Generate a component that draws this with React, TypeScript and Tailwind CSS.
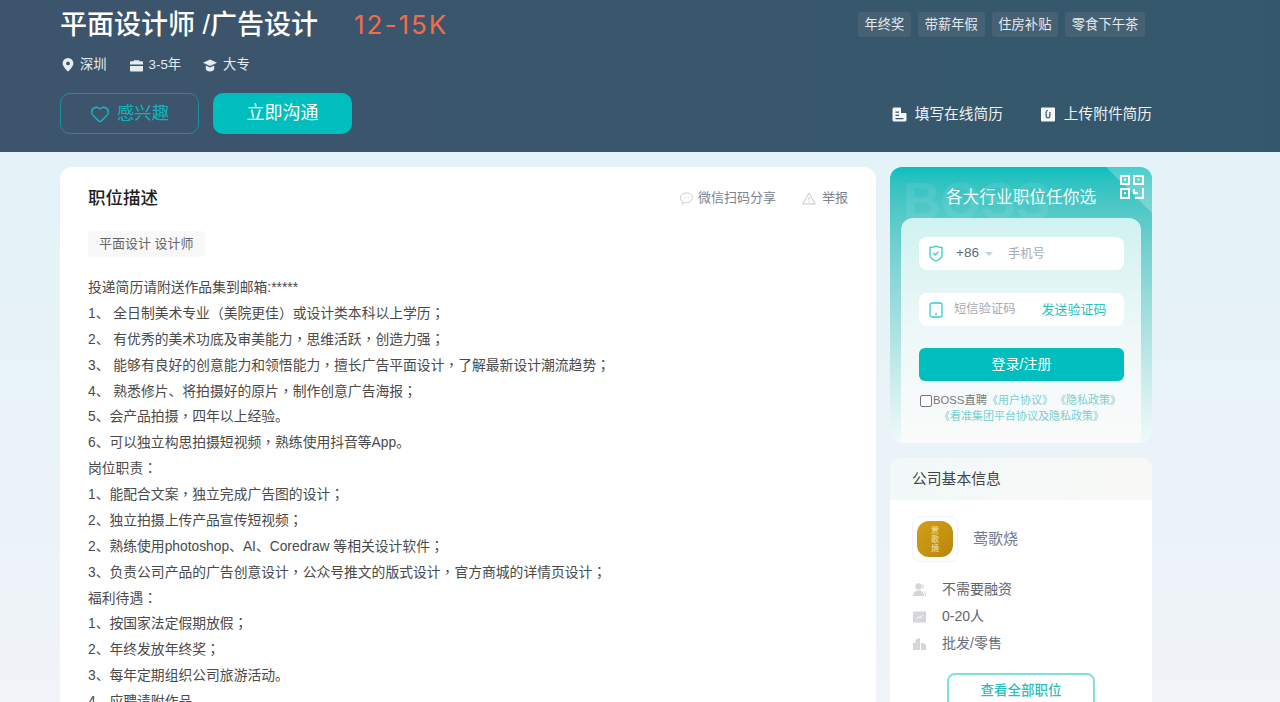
import { Heart } from "lucide-react";

const desc = [
  "投递简历请附送作品集到邮箱:*****",
  "1、 全日制美术专业（美院更佳）或设计类本科以上学历；",
  "2、 有优秀的美术功底及审美能力，思维活跃，创造力强；",
  "3、 能够有良好的创意能力和领悟能力，擅长广告平面设计，了解最新设计潮流趋势；",
  "4、 熟悉修片、将拍摄好的原片，制作创意广告海报；",
  "5、会产品拍摄，四年以上经验。",
  "6、可以独立构思拍摄短视频，熟练使用抖音等App。",
  "岗位职责：",
  "1、能配合文案，独立完成广告图的设计；",
  "2、独立拍摄上传产品宣传短视频；",
  "2、熟练使用photoshop、AI、Coredraw 等相关设计软件；",
  "3、负责公司产品的广告创意设计，公众号推文的版式设计，官方商城的详情页设计；",
  "福利待遇：",
  "1、按国家法定假期放假；",
  "2、年终发放年终奖；",
  "3、每年定期组织公司旅游活动。",
  "4、应聘请附作品",
];

const tags = ["年终奖", "带薪年假", "住房补贴", "零食下午茶"];

// the reference centres this punctuation in its box, the SC font does not
const Line = ({ text }: { text: string }) => (
  <div>
    {text.split(/([，；：（）])/).map((part, i) =>
      /^[，；：（）]$/.test(part) ? (
        <span key={i} className="font-['Noto_Sans_CJK_TC',sans-serif] leading-[0]">
          {part}
        </span>
      ) : (
        part
      )
    )}
  </div>
);

const Header = () => (
  <div className="h-[152px] shrink-0 bg-gradient-to-r from-[#3d546c] to-[#33586c] overflow-hidden">
    <div className="w-[1092px] ml-[60px]">
      <div className="flex justify-between h-[50px]">
        <div className="flex items-center">
          <h1 className="text-[27px] leading-[50px] font-medium text-white">平面设计师 /广告设计</h1>
          <span className="ml-[36px] font-['Inter',sans-serif] text-[26px] leading-[50px] tracking-[2px] text-[#f26d47]">12-15K</span>
        </div>
        <div className="flex gap-[7px] mt-3 mr-[7px]">
          {tags.map((t) => (
            <span key={t} className="h-[25px] px-[6.7px] rounded-[3px] bg-[#466074] text-[13.3px] leading-[25px] text-[#e4eaee]">
              {t}
            </span>
          ))}
        </div>
      </div>
      <div className="flex items-center h-[28px] mt-px text-[13.3px] text-[#e6ebef]">
        <svg width="12" height="14" viewBox="0 0 12 14" className="ml-[2px]">
          <path fillRule="evenodd" fill="#e6ebef" d="M6 0a5.4 5.4 0 0 1 5.4 5.4C11.400 8.600 6 13.500 6 13.500S.6 8.600.6 5.400A5.400 5.400 0 0 1 6 0Zm0 3.500a1.900 1.900 0 1 0 0 3.800 1.900 1.900 0 0 0 0-3.800Z" />
        </svg>
        <span className="ml-[6px]">深圳</span>
        <svg width="13" height="13" viewBox="0 0 14 13" className="ml-[23px]">
          <path fill="#e6ebef" d="M4 2V.8h6V2h3a1 1 0 0 1 1 1v2.500H0V3a1 1 0 0 1 1-1h3Zm1.200 0h3.600v-.2H5.200V2ZM0 7h14v5a1 1 0 0 1-1 1H1a1 1 0 0 1-1-1V7Z" />
        </svg>
        <span className="ml-[6px]">3-5年</span>
        <svg width="14" height="13" viewBox="0 0 15 13" className="ml-[22px]">
          <path fill="#e6ebef" d="M7.500 0 15 3.500 7.500 7 0 3.500 7.500 0ZM3 6.600l4.500 2 4.500-2V10c0 1.700-2 3-4.500 3S3 11.700 3 10V6.600Z" />
        </svg>
        <span className="ml-[6px]">大专</span>
      </div>
      <div className="flex items-center justify-between mt-[14px]">
        <div className="flex gap-[14px]">
          <button className="w-[139px] h-[41px] rounded-[10px] border border-[#14929f] flex items-center justify-center gap-[7px] text-[17.3px] text-[#12b3bd]">
            <Heart size={20} strokeWidth={1.7} className="text-[#12bcc4]" />
            感兴趣
          </button>
          <button className="w-[139px] h-[41px] rounded-[10px] bg-[#00bebd] text-[18px] text-white">立即沟通</button>
        </div>
        <div className="flex items-center pt-[2px] text-[14.7px] text-[#eef2f4]">
          <svg width="15" height="15" viewBox="0 0 15 15">
            <path fillRule="evenodd" fill="#f4f6f8" d="M2 .5h6.500l.5.500v5h4.500a1 1 0 0 1 1 1v6a1.500 1.500 0 0 1-1.500 1.500H2A1.500 1.500 0 0 1 .5 13V2A1.500 1.500 0 0 1 2 .5Zm1.500 4v1.200h3.500V4.500H3.500Zm0 3.300V9h3.500V7.800H3.500Zm0 3.200v1.200h8V11h-8Z" />
          </svg>
          <span className="ml-2">填写在线简历</span>
          <svg width="14" height="15" viewBox="0 0 14 15" className="ml-[38px]">
            <path fillRule="evenodd" fill="#f4f6f8" d="M1 .5h12a1 1 0 0 1 1 1v12a1 1 0 0 1-1 1H1a1 1 0 0 1-1-1v-12a1 1 0 0 1 1-1Zm6 2.500C5.400 3 4.500 4 4.500 5.500v3.200C4.500 10.300 5.500 11.500 7 11.500s2.500-1.200 2.500-2.800V5H8.300v3.700c0 .9-.5 1.600-1.300 1.600s-1.300-.7-1.300-1.600V5.500c0-.9.500-1.400 1.300-1.400V3Z" />
          </svg>
          <span className="ml-[9px]">上传附件简历</span>
        </div>
      </div>
    </div>
  </div>
);

const JobCard = () => (
  <div className="w-[816px] h-[560px] rounded-t-[12px] bg-white px-7 overflow-hidden">
    <div className="flex items-center justify-between h-[62px]">
      <h3 className="pt-px text-[17.5px] font-medium text-[#222]">职位描述</h3>
      <div className="flex items-center text-[13px] text-[#7b8291]">
        <svg width="13" height="13" viewBox="0 0 13 13" fill="none" stroke="#c9ccd2">
          <path d="M6.500 1C9.800 1 12.500 3 12.500 5.800s-2.700 4.700-6 4.700c-.6 0-1.100 0-1.600-.2L2.600 12l.2-2.600C1.400 8.500.5 7.300.5 5.800.5 3 3.200 1 6.500 1Z" />
          <path d="M4 5.800h.8M6.200 5.800H7M8.400 5.800h.8" />
        </svg>
        <span className="ml-[5px]">微信扫码分享</span>
        <svg width="14" height="13" viewBox="0 0 14 13" fill="none" stroke="#c4c7cc" className="ml-[26px]">
          <path d="M7 1 13.200 12H.8L7 1Z" />
          <path d="M7 5v3.500M7 9.500v1" />
        </svg>
        <span className="ml-[6px]">举报</span>
      </div>
    </div>
    <div className="mt-[2px] w-fit h-[26px] px-[11px] rounded-[4px] bg-[#f8f8f8] text-[13px] leading-[26px] text-[#666]">平面设计 设计师</div>
    <div className="mt-[18px] text-[13.8px] leading-[25.87px] text-[#4a4a4a]">
      {desc.map((d, i) => (
        <Line key={i} text={d} />
      ))}
    </div>
  </div>
);

const LoginCard = () => (
  <div className="relative h-[276px] rounded-[12px] bg-gradient-to-b from-[#03bfbe] to-[#f0f9fa] overflow-hidden">
    <div className="absolute left-[13px] top-[8px] text-[52px] leading-[52px] font-bold text-white/[.08]">BOSS</div>
    <div className="absolute right-0 top-0 w-[46px] h-[46px] bg-white/25 [clip-path:polygon(0_0,100%_0,100%_100%)]" />
    <svg width="24" height="24" viewBox="0 0 24 24" fill="none" stroke="white" strokeWidth="2" className="absolute right-[8px] top-[8px]">
      <path d="M1 1h8v8H1zM14 1h9v8h-9zM1 14h8v9H1z" />
      <path d="M4 4.500h2M17.500 4.500h2M4 18h2" />
      <path d="M14 14v4h4M23 13v10h-8" />
    </svg>
    <h3 className="relative text-center text-[16.7px] leading-[24px] pt-[19px] text-[#eefafa]">各大行业职位任你选</h3>
    <div className="absolute left-[11px] right-[11px] top-[51px] bottom-0 rounded-t-[12px] bg-gradient-to-b from-[#cff2f0] via-[#eef8f8] to-[#fbfbfb] pl-[18px] pr-[17px] pt-[19px]">
      <div className="flex items-center h-[33px] rounded-[8px] bg-white pl-[10px] text-[13.5px]">
        <svg width="14" height="17" viewBox="0 0 14 17" fill="none" stroke="#37cdcd" strokeWidth="1.300">
          <path d="M7 1c2 1 4 1.500 6 1.500v7C13 12.500 10 15 7 16c-3-1-6-3.500-6-6.500v-7C3 2.500 5 2 7 1Z" />
          <path d="m4.300 8 2 2 3.400-3.400" />
        </svg>
        <span className="ml-[13px] text-[#61687c]">+86</span>
        <span className="ml-[6px] w-0 h-0 border-x-[4px] border-t-[4px] border-x-transparent border-t-[#ccd0d6]" />
        <span className="ml-[15px] pt-px text-[12.3px] text-[#a6abb6]">手机号</span>
      </div>
      <div className="flex items-center h-[33px] mt-[23px] rounded-[8px] bg-white pl-[10px] text-[12.3px]">
        <svg width="14" height="16" viewBox="0 0 14 16" fill="none" stroke="#37cdcd" strokeWidth="1.300">
          <rect x="1" y="1" width="12" height="14" rx="2" />
          <path d="M6 12h2" />
        </svg>
        <span className="ml-[11px] text-[#a6abb6]">短信验证码</span>
        <span className="ml-[26px] text-[13px] text-[#2cbfc0]">发送验证码</span>
      </div>
      <button className="w-full h-[33px] mt-[22px] rounded-[6px] bg-[#00bebd] text-[14px] text-white">登录/注册</button>
      <div className="mt-[12px] text-center text-[11px] leading-[15.5px] text-[#79d0cf] whitespace-nowrap">
        <div className="flex items-center pl-px">
          <span className="w-[12px] h-[12px] rounded-[2px] border border-[#777] bg-white" />
          <span className="ml-px text-[11.3px] text-[#7a7a7a]">BOSS直聘</span>
          <span>《用户协议》</span>
          <span className="ml-[2px]">《隐私政策》</span>
        </div>
        <div>《看准集团平台协议及隐私政策》</div>
      </div>
    </div>
  </div>
);

const CompanyCard = () => (
  <div className="mt-[15px] h-[244px] rounded-t-[12px] bg-white overflow-hidden">
    <div className="h-[42px] pl-[22px] bg-gradient-to-r from-[#f2f9f9] to-[#f8f8f6] text-[14.8px] leading-[42px] text-[#444]">公司基本信息</div>
    <div className="flex items-center mt-[16px] ml-[22px]">
      <div className="w-[46px] h-[46px] rounded-[8px] border border-[#f3f4f8] flex items-center justify-center">
        <div className="w-[36px] h-[36px] rounded-[12px] bg-gradient-to-br from-[#d4a017] to-[#b8860b] flex items-center justify-center text-[8px] leading-[9px] text-[#f4e4b0] text-center">
          鶯<br />歌<br />燒
        </div>
      </div>
      <span className="ml-[15px] text-[15px] text-[#707a93]">莺歌烧</span>
    </div>
    <div className="ml-[23px] mt-[14px] text-[14px] text-[#5f6470]">
      <div className="flex items-center h-[27px]">
        <svg width="13" height="13" viewBox="0 0 13 13" fill="#d5d6d9">
          <circle cx="5.500" cy="3.500" r="3.200" />
          <path d="M0 13c0-3.500 2.200-5.500 5.500-5.500S11 9.500 11 13H0Z" />
          <path d="M9.500 1a3 3 0 0 1 0 5M11 8c1.300.7 2 2.500 2 5h-1" />
        </svg>
        <span className="ml-[16px]">不需要融资</span>
      </div>
      <div className="flex items-center h-[27px]">
        <svg width="13" height="12" viewBox="0 0 13 12">
          <rect width="13" height="11" y=".5" fill="#d5d6d9" />
          <path d="m3 8 2.500-2.500L7 7l3-3" fill="none" stroke="#fff" />
        </svg>
        <span className="ml-[16px]">0-20人</span>
      </div>
      <div className="flex items-center h-[27px]">
        <svg width="13" height="12" viewBox="0 0 13 12" fill="#d5d6d9">
          <path d="M0 12V5h2.500V1.500L7 0v12H0ZM8 12V4.500l5 2V12H8Z" />
        </svg>
        <span className="ml-[16px] text-[#666e80]">批发/零售</span>
      </div>
    </div>
    <button className="block mx-auto mt-[16px] w-[148px] h-[36px] rounded-[8px] border-2 border-[#7fe0df] text-[13.5px] font-medium text-[#2ebdbd]">查看全部职位</button>
  </div>
);

export default function App() {
  return (
    <div className="w-[1280px] h-[702px] flex flex-col overflow-hidden font-['Liberation_Sans','Noto_Sans_CJK_SC',sans-serif]">
      <Header />
      <div className="flex-1 bg-gradient-to-b from-[#e3f3f7] to-[#f1f3f9] pt-[15px] pl-[60px]">
        <div className="flex gap-[14px]">
          <JobCard />
          <div className="w-[262px]">
            <LoginCard />
            <CompanyCard />
          </div>
        </div>
      </div>
    </div>
  );
}
